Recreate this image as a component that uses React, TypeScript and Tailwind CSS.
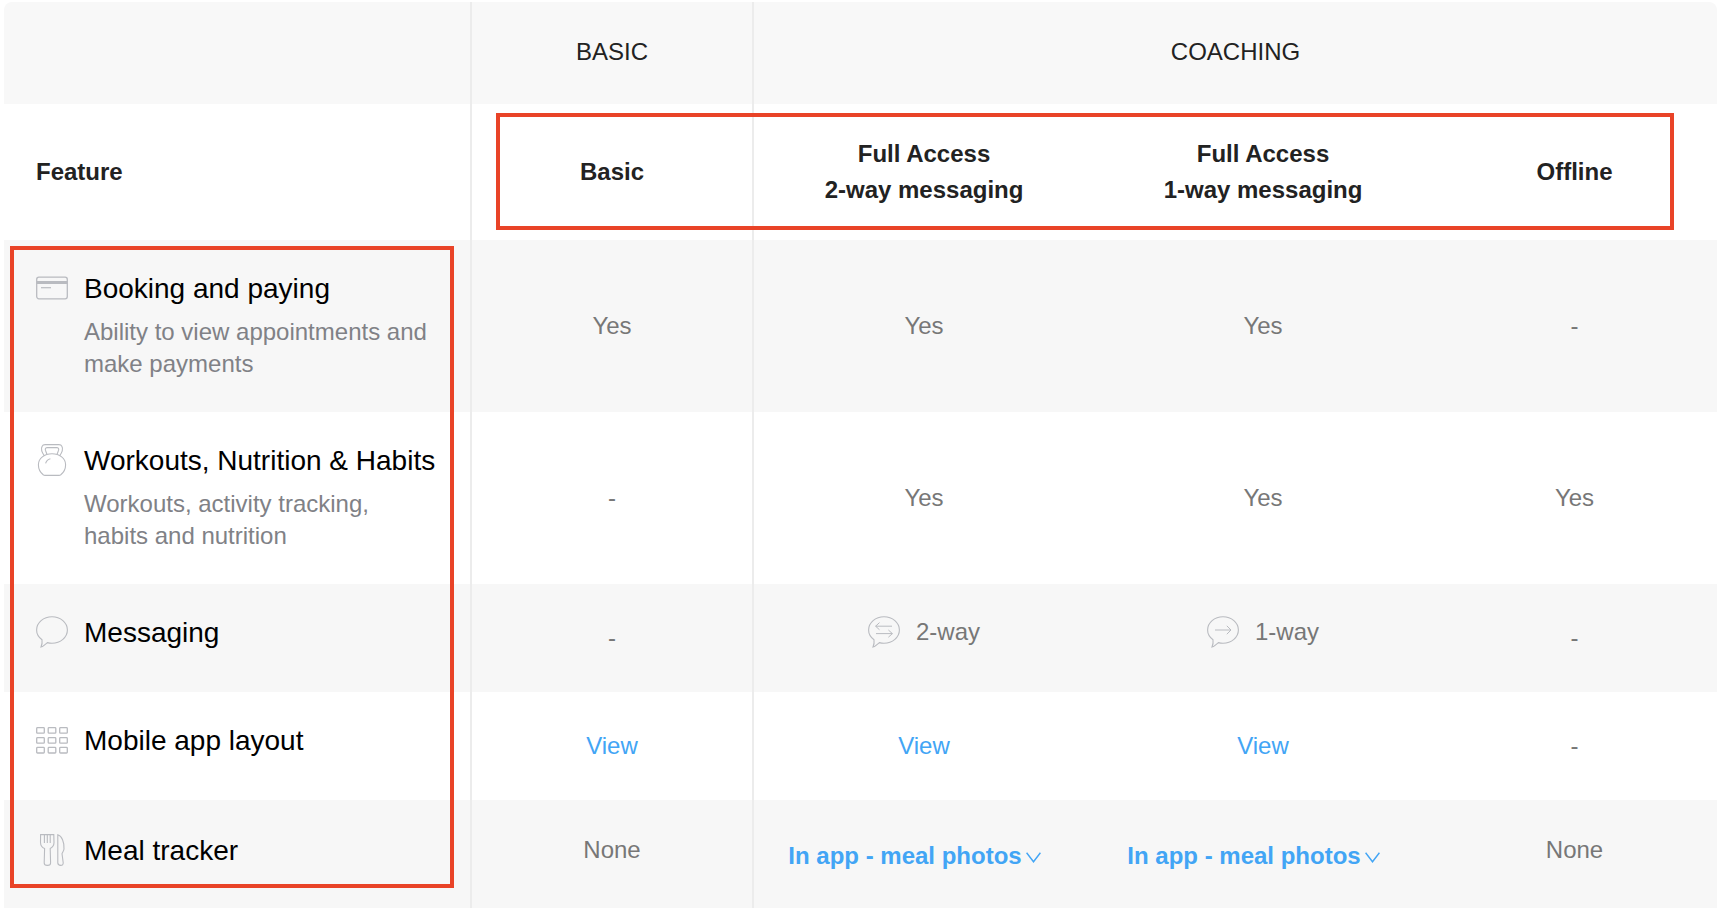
import React from "react";

const stroke = "#b9bbc0";

const Card = () => (
  <svg width="32" height="32" viewBox="0 0 32 32" fill="none" stroke={stroke} strokeWidth="1.3">
    <rect x="0.7" y="5.2" width="30.6" height="21.6" rx="2.2" />
    <rect x="0.7" y="9" width="30.6" height="3" fill={stroke} stroke="none" />
    <path d="M5 15.7h10" strokeWidth="1.2" />
  </svg>
);
const Kettle = () => (
  <svg width="32" height="32" viewBox="0 0 32 32" fill="none" stroke={stroke} strokeWidth="1.1">
    <path d="M8.4 12 C6 8.4 4.8 4.8 6 2.4 C6.6 1.1 7.8 .6 9.2 .6 H22.8 C24.2 .6 25.4 1.1 26 2.4 C27.2 4.8 26 8.4 23.6 12" />
    <path d="M10.9 10.2 L9.4 6.2 C9 4.6 9.8 3.6 11.2 3.6 H20.8 C22.2 3.6 23 4.6 22.6 6.2 L21.1 10.2" />
    <path d="M9 31.4 C8.4 31.4 7.8 31.2 7.2 30.8 C4.2 28.4 2.4 24.8 2.4 20.8 C2.4 14.2 8.4 9.8 16 9.8 C23.6 9.8 29.6 14.2 29.6 20.8 C29.6 24.8 27.8 28.4 24.8 30.8 C24.2 31.2 23.6 31.4 23 31.4 Z" />
    <path d="M9.6 19.4 C10.3 16.8 12 15.2 14.4 14.7" />
  </svg>
);
const Bubble = ({ children }: { children?: React.ReactNode }) => (
  <svg width="32" height="32" viewBox="0 0 32 32" fill="none" stroke={stroke} strokeWidth="1.1">
    <path d="M16 .8 C24.5 .8 31.4 6.8 31.4 14 C31.4 21.2 24.5 27.2 16 27.2 C14.2 27.2 12.8 27 11.4 26.6 C9.6 28 7.4 30.6 5 31 C6 29 6.4 26.8 6 23.8 C2.6 21.2 .6 17.8 .6 14 C.6 6.8 7.5 .8 16 .8 Z" />
    {children}
  </svg>
);
const Grid3 = () => (
  <svg width="32" height="32" viewBox="0 0 32 32" fill="none" stroke={stroke} strokeWidth="1.3">
    {[3.6, 13.6, 23.4].map((y) =>
      [0.7, 12.2, 23.7].map((x) => <rect key={`${x}-${y}`} x={x} y={y} width="7.6" height="5.6" rx="0.8" />)
    )}
  </svg>
);
const Cutlery = () => (
  <svg width="32" height="32" viewBox="0 0 32 32" fill="none" stroke={stroke} strokeWidth="1.1">
    <path d="M4.6 .6 H17.8 L18 8.5 C18 11.6 15.6 13.8 14.2 14.6 L14.6 29 C14.6 30.5 13.4 31.4 11.4 31.4 C9.4 31.4 8.2 30.5 8.2 29 L8.6 14.6 C6.6 13.8 4.6 11.6 4.5 8.5 Z" />
    <path d="M8.4 .6 V9 M11.3 .6 V9 M14.2 .6 V9" />
    <path d="M21.8 .8 C25.8 2 28.4 8 28 15 C27.8 17 26.6 18 26 19.6 L27.2 28.8 C27.3 30.6 26.2 31.4 24.8 31.4 C23 31.4 21.8 30.6 21.8 28.8 Z" />
  </svg>
);

const arrowsTwo = (
  <path d="M11.5 6.6 L7.6 10.2 L11.5 13.8 M7.6 10.2 H24 M20.4 14 L24.4 17.6 L20.4 21.2 M8 17.6 H24.4" strokeWidth="1" />
);
const arrowOne = <path d="M8 14 H24 M19.8 9.8 L24 14 L19.8 18.2" strokeWidth="1" />;

const Chevron = () => (
  <svg width="15" height="11" viewBox="0 0 15 11" fill="none" stroke="#42a5f5" strokeWidth="1.4" className="ml-[4px] mt-[2px] shrink-0">
    <path d="M.6 .8 L7.5 9.8 L14.4 .8" />
  </svg>
);

const sans = "font-['Liberation_Sans',Arial,sans-serif]";

const Feature = ({ icon, title, desc, pad = "pt-[32px]" }: { icon: React.ReactNode; title: string; desc?: string[]; pad?: string }) => (
  <div className={`flex gap-[16px] pl-[32px] border-r-2 border-[#ececec] ${pad}`}>
    <div className="w-[32px] h-[32px] shrink-0">{icon}</div>
    <div className="mt-[1px]">
      <div className="text-[28px] leading-[32px] text-black whitespace-nowrap">{title}</div>
      {desc && (
        <div className="text-[24px] leading-[32px] text-[#808186] mt-[11px] whitespace-nowrap">
          {desc.map((d) => (
            <div key={d}>{d}</div>
          ))}
        </div>
      )}
    </div>
  </div>
);

const Val = ({ children, cls = "", divider = false }: { children: React.ReactNode; cls?: string; divider?: boolean }) => (
  <div className={`flex items-center justify-center text-[24px] text-[#777777] ${divider ? "border-r-2 border-[#ececec]" : ""} ${cls}`}>
    {children}
  </div>
);

const Link = ({ children }: { children: React.ReactNode }) => <span className="text-[#42a5f5]">{children}</span>;

const Photos = () => (
  <div className="flex items-center font-bold text-[24px] text-[#42a5f5] whitespace-nowrap pt-[4px] mr-[19px]">
    In app - meal photos
    <Chevron />
  </div>
);

const rowCols = "grid grid-cols-[468px_282px_340px_338px_285px]";

export default function App() {
  return (
    <div className={`relative w-[1718px] h-[908px] overflow-hidden bg-white pl-[4px] pr-[1px] pt-[2px] ${sans}`}>
      {/* band 1 */}
      <div className={`${rowCols} h-[102px] bg-[#f8f8f8] rounded-t-[8px] text-[24px] text-[#222222]`}>
        <div className="border-r-2 border-[#ececec]" />
        <div className="flex items-center justify-center border-r-2 border-[#ececec] pb-[2px]">BASIC</div>
        <div className="col-span-3 flex items-center justify-center pb-[2px]">COACHING</div>
      </div>
      {/* band 2 */}
      <div className={`${rowCols} h-[136px] bg-white font-bold text-[24px] leading-[36px] text-[#222222] text-center`}>
        <div className="flex items-center pl-[32px] border-r-2 border-[#ececec]">Feature</div>
        <div className="flex items-center justify-center border-r-2 border-[#ececec]">Basic</div>
        <div className="flex items-center justify-center">Full Access<br />2-way messaging</div>
        <div className="flex items-center justify-center">Full Access<br />1-way messaging</div>
        <div className="flex items-center justify-center">Offline</div>
      </div>
      {/* booking */}
      <div className={`${rowCols} h-[172px] bg-[#f7f7f7]`}>
        <Feature icon={<Card />} title="Booking and paying" desc={["Ability to view appointments and", "make payments"]} />
        <Val divider>Yes</Val>
        <Val>Yes</Val>
        <Val>Yes</Val>
        <Val>-</Val>
      </div>
      {/* workouts */}
      <div className={`${rowCols} h-[172px] bg-white`}>
        <Feature icon={<Kettle />} title="Workouts, Nutrition & Habits" desc={["Workouts, activity tracking,", "habits and nutrition"]} />
        <Val divider>-</Val>
        <Val>Yes</Val>
        <Val>Yes</Val>
        <Val>Yes</Val>
      </div>
      {/* messaging */}
      <div className={`${rowCols} h-[108px] bg-[#f7f7f7]`}>
        <Feature icon={<Bubble />} title="Messaging" />
        <Val divider>-</Val>
        <Val cls="gap-[16px] pb-[12px]"><Bubble>{arrowsTwo}</Bubble>2-way</Val>
        <Val cls="gap-[16px] pb-[12px]"><Bubble>{arrowOne}</Bubble>1-way</Val>
        <Val>-</Val>
      </div>
      {/* mobile */}
      <div className={`${rowCols} h-[108px] bg-white`}>
        <Feature icon={<Grid3 />} title="Mobile app layout" />
        <Val divider><Link>View</Link></Val>
        <Val><Link>View</Link></Val>
        <Val><Link>View</Link></Val>
        <Val>-</Val>
      </div>
      {/* meal */}
      <div className={`${rowCols} h-[108px] bg-[#f7f7f7]`}>
        <Feature icon={<Cutlery />} title="Meal tracker" pad="pt-[34px]" />
        <Val divider cls="pb-[8px]">None</Val>
        <Val><Photos /></Val>
        <Val><Photos /></Val>
        <Val cls="pb-[8px]">None</Val>
      </div>

      {/* annotation frames */}
      <div className="absolute left-[496px] top-[113px] w-[1178px] h-[117px] border-4 border-[#e94327]" />
      <div className="absolute left-[10px] top-[246px] w-[444px] h-[642px] border-4 border-[#e94327]" />
    </div>
  );
}
